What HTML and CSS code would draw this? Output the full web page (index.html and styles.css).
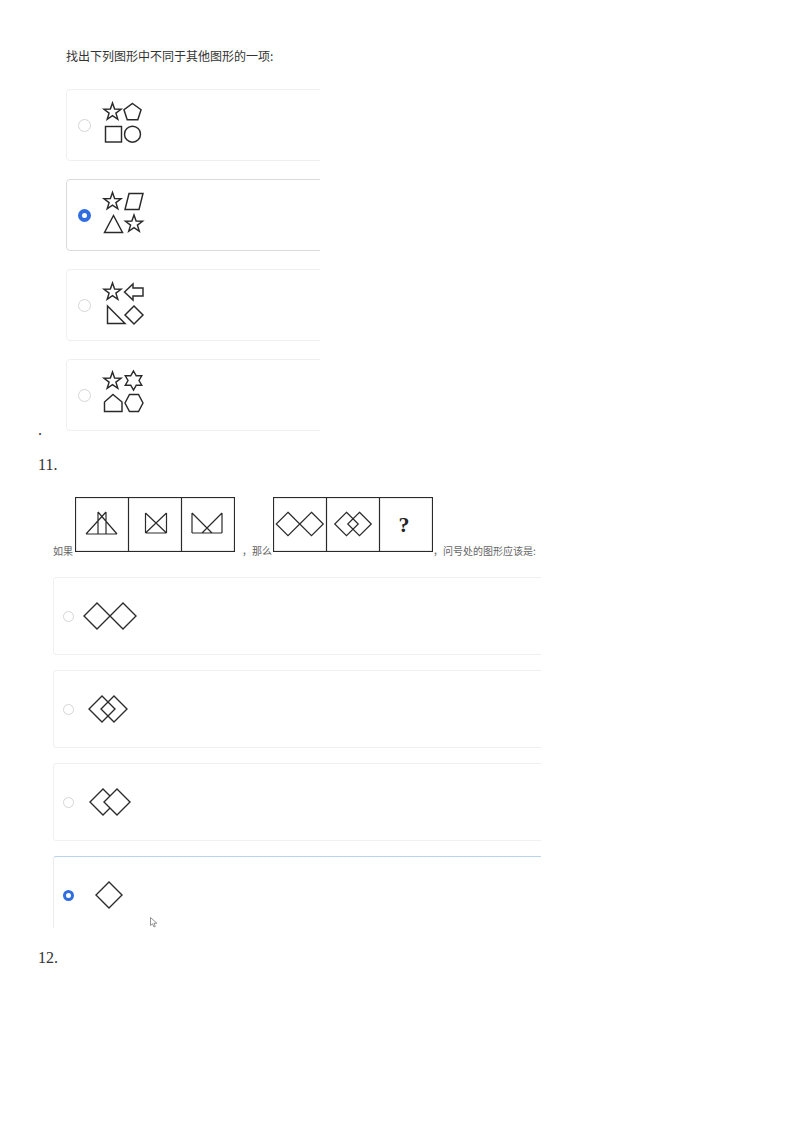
FILE: index.html
```html
<!DOCTYPE html>
<html lang="zh">
<head>
<meta charset="utf-8">
<title>图形推理</title>
<link rel="stylesheet" href="styles.css">
</head>
<body>
<div class="doc">
  <div class="row-shot">
    <span class="dot">.</span>
    <div class="shot10">
      <div class="q-title">找出下列图形中不同于其他图形的一项:</div>
      <div class="cards10">
        <div class="card10">
          <span class="radio"></span>
          <svg class="shapes10" width="40" height="40" viewBox="0 0 40 40">
            <path transform="translate(8.5,9)" d="M0,-9 L2.12,-2.91 L8.56,-2.78 L3.42,1.11 L5.29,7.28 L0,3.6 L-5.29,7.28 L-3.42,1.11 L-8.56,-2.78 L-2.12,-2.91 Z"/>
            <path transform="translate(28.5,9.5)" d="M0,-9 L8.56,-2.78 L5.29,7.28 L-5.29,7.28 L-8.56,-2.78 Z"/>
            <rect x="1.5" y="23.5" width="16" height="15.5"/>
            <circle cx="28.5" cy="31.2" r="8"/>
          </svg>
        </div>
        <div class="card10 selected">
          <span class="radio on"></span>
          <svg class="shapes10" width="40" height="40" viewBox="0 0 40 40">
            <path transform="translate(8.5,8.5)" d="M0,-9 L2.12,-2.91 L8.56,-2.78 L3.42,1.11 L5.29,7.28 L0,3.6 L-5.29,7.28 L-3.42,1.11 L-8.56,-2.78 L-2.12,-2.91 Z"/>
            <path d="M25,0.5 L39,0.5 L35,16.5 L21,16.5 Z"/>
            <path d="M9.5,22.5 L18.5,39.5 L0.5,39.5 Z"/>
            <path transform="translate(30,31)" d="M0,-9 L2.12,-2.91 L8.56,-2.78 L3.42,1.11 L5.29,7.28 L0,3.6 L-5.29,7.28 L-3.42,1.11 L-8.56,-2.78 L-2.12,-2.91 Z"/>
          </svg>
        </div>
        <div class="card10">
          <span class="radio"></span>
          <svg class="shapes10" width="40" height="40" viewBox="0 0 40 40">
            <path transform="translate(8.5,9)" d="M0,-9 L2.12,-2.91 L8.56,-2.78 L3.42,1.11 L5.29,7.28 L0,3.6 L-5.29,7.28 L-3.42,1.11 L-8.56,-2.78 L-2.12,-2.91 Z"/>
            <path d="M20.5,9 L29,1 L29,5 L39,5 L39,13 L29,13 L29,17 Z"/>
            <path d="M3.5,23 L3.5,40.5 L21,40.5 Z"/>
            <path d="M30,23 L39,32 L30,41 L21,32 Z"/>
          </svg>
        </div>
        <div class="card10">
          <span class="radio"></span>
          <svg class="shapes10" width="40" height="40" viewBox="0 0 40 40">
            <path transform="translate(8.5,8)" d="M0,-9 L2.12,-2.91 L8.56,-2.78 L3.42,1.11 L5.29,7.28 L0,3.6 L-5.29,7.28 L-3.42,1.11 L-8.56,-2.78 L-2.12,-2.91 Z"/>
            <path transform="translate(29.5,7.5)" d="M0,-9.5 L2.75,-4.76 L8.23,-4.75 L5.5,0 L8.23,4.75 L2.75,4.76 L0,9.5 L-2.75,4.76 L-8.23,4.75 L-5.5,0 L-8.23,-4.75 L-2.75,-4.76 Z"/>
            <path d="M9,21.5 L18,29 L18,38.5 L0.5,38.5 L0.5,29 Z"/>
            <path d="M25.5,21.5 L34.5,21.5 L39,30 L34.5,38.5 L25.5,38.5 L21,30 Z"/>
          </svg>
        </div>
      </div>
    </div>
  </div>

  <p class="num">11.</p>

  <div class="q11row">
    <span class="small">如果</span>
    <svg class="box box1" width="160" height="55" viewBox="0 0 160 55">
      <rect x="0.5" y="0.5" width="159" height="54"/>
      <line x1="53.5" y1="0" x2="53.5" y2="55"/>
      <line x1="106.5" y1="0" x2="106.5" y2="55"/>
      <path d="M23,15 L23,37 M31,15 L31,37 M23,15 L42,37 M31,15 L11,37 M11,37 L42,37"/>
      <path d="M70.5,16 L70.5,36 M91.5,16 L91.5,36 M70.5,16 L91.5,36 M91.5,16 L70.5,36 M70.5,36 L91.5,36"/>
      <path d="M117,16 L117,36 M147,16 L147,36 M117,16 L137,36 M147,16 L127,36 M117,36 L147,36"/>
    </svg>
    <span class="small comma1">，那么</span>
    <svg class="box box2" width="160" height="55" viewBox="0 0 160 55">
      <rect x="0.5" y="0.5" width="159" height="54"/>
      <line x1="53.5" y1="0" x2="53.5" y2="55"/>
      <line x1="106.5" y1="0" x2="106.5" y2="55"/>
      <path d="M15,15.25 L26.75,27 L15,38.75 L3.25,27 Z"/>
      <path d="M38.5,15.25 L50.25,27 L38.5,38.75 L26.75,27 Z"/>
      <path d="M73.5,15.25 L85.25,27 L73.5,38.75 L61.75,27 Z"/>
      <path d="M86.5,15.25 L98.25,27 L86.5,38.75 L74.75,27 Z"/>
      <text x="131" y="35" class="qmark">?</text>
    </svg>
    <span class="small">，问号处的图形应该是:</span>
  </div>

  <div class="shot11">
    <div class="card11">
      <span class="radio r11"></span>
      <svg class="shapes11" width="56" height="30" viewBox="0 0 56 30">
        <path d="M15,2 L28,15 L15,28 L2,15 Z"/>
        <path d="M41,2 L54,15 L41,28 L28,15 Z"/>
      </svg>
    </div>
    <div class="card11">
      <span class="radio r11"></span>
      <svg class="shapes11" width="56" height="30" viewBox="0 0 56 30">
        <path d="M20,2 L33,15 L20,28 L7,15 Z"/>
        <path d="M32,2 L45,15 L32,28 L19,15 Z"/>
      </svg>
    </div>
    <div class="card11">
      <span class="radio r11"></span>
      <svg class="shapes11" width="56" height="30" viewBox="0 0 56 30">
        <path d="M21,2 L34,15 L21,28 L8,15 Z"/>
        <path class="front" d="M35,2 L48,15 L35,28 L22,15 Z"/>
      </svg>
    </div>
    <div class="card11 picked">
      <span class="radio r11 on"></span>
      <svg class="shapes11" width="56" height="30" viewBox="0 0 56 30">
        <path d="M27,2 L40,15 L27,28 L14,15 Z"/>
      </svg>
      <svg class="cursor" width="8" height="11" viewBox="0 0 8 11">
        <path d="M0.5,0.5 L0.5,8.5 L2.5,6.8 L4,10 L5.3,9.4 L3.9,6.3 L6.8,6.2 Z"/>
      </svg>
    </div>
  </div>

  <p class="num num12">12.</p>
</div>
</body>
</html>
```

FILE: styles.css
```css
html, body {
  margin: 0;
  padding: 0;
  background: #ffffff;
}

body {
  font-family: "Liberation Serif", "Times New Roman", serif;
  color: #222;
}

.doc {
  padding: 30px 0 0 38px;
}

.row-shot {
  display: flex;
  align-items: flex-end;
}

.dot {
  font-size: 16px;
  line-height: 16px;
  color: #333;
  margin-bottom: -5px;
}

.shot10 {
  margin-left: 24px;
  width: 254px;
  height: 403px;
  overflow: hidden;
  padding-top: 18px;
  box-sizing: border-box;
  font-family: "Noto Sans CJK SC", "Noto Sans", sans-serif;
}

.q-title {
  font-size: 12px;
  line-height: 16px;
  color: #333;
  white-space: nowrap;
}

.cards10 {
  margin-top: 25px;
  display: flex;
  flex-direction: column;
  gap: 18px;
}

.card10 {
  width: 300px;
  height: 72px;
  box-sizing: border-box;
  border: 1px solid #efefef;
  border-radius: 4px;
  display: flex;
  align-items: center;
  padding-left: 11px;
}

.card10.selected {
  border-color: #dadada;
}

.radio {
  width: 13px;
  height: 13px;
  box-sizing: border-box;
  border: 1px solid #d6d6d6;
  border-radius: 50%;
  background: #fff;
  flex: none;
}

.radio.on {
  border: 4px solid #2f6de1;
}

.shapes10 {
  margin-left: 13px;
  margin-bottom: 4px;
  overflow: visible;
  fill: none;
  stroke: #2a2a2a;
  stroke-width: 1.45;
  stroke-linejoin: miter;
}

.num {
  margin: 22px 0 0 0;
  font-size: 16px;
  line-height: 20px;
  color: #333;
}

.q11row {
  display: flex;
  align-items: flex-end;
  margin-top: 22px;
  padding-left: 15px;
}

.small {
  font-family: "Noto Sans CJK SC", "Noto Sans", sans-serif;
  font-size: 10px;
  line-height: 12px;
  color: #666;
  white-space: nowrap;
  margin-bottom: -5px;
}

.box {
  display: block;
  fill: none;
  stroke: #2a2a2a;
  stroke-width: 1.2;
}

.box1 {
  margin-left: 2px;
}

.comma1 {
  margin-left: 7px;
}

.box2 {
  margin-left: 1px;
}

.box .qmark {
  font-family: "Liberation Serif", serif;
  font-size: 22px;
  font-weight: bold;
  fill: #222;
  stroke: none;
  text-anchor: middle;
}

.shot11 {
  margin: 25px 0 0 15px;
  width: 488px;
  height: 351px;
  overflow: hidden;
  display: flex;
  flex-direction: column;
  gap: 15px;
}

.card11 {
  position: relative;
  width: 520px;
  height: 78px;
  flex: none;
  box-sizing: border-box;
  border: 1px solid #f0f0f0;
  border-radius: 3px;
  display: flex;
  align-items: center;
  padding-left: 9px;
}

.card11.picked {
  border-color: #ececec;
  border-top-color: #b9d4ef;
}

.radio.r11 {
  width: 11px;
  height: 11px;
}

.radio.r11.on {
  border: 3.5px solid #2f6de1;
}

.shapes11 {
  margin-left: 8px;
  fill: none;
  stroke: #2b2b2b;
  stroke-width: 1.4;
}

.shapes11 .front {
  fill: #fff;
}

.cursor {
  position: absolute;
  left: 96px;
  top: 60px;
  fill: #fff;
  stroke: #777;
  stroke-width: 0.8;
}

.num12 {
  margin-top: 20px;
}
```
